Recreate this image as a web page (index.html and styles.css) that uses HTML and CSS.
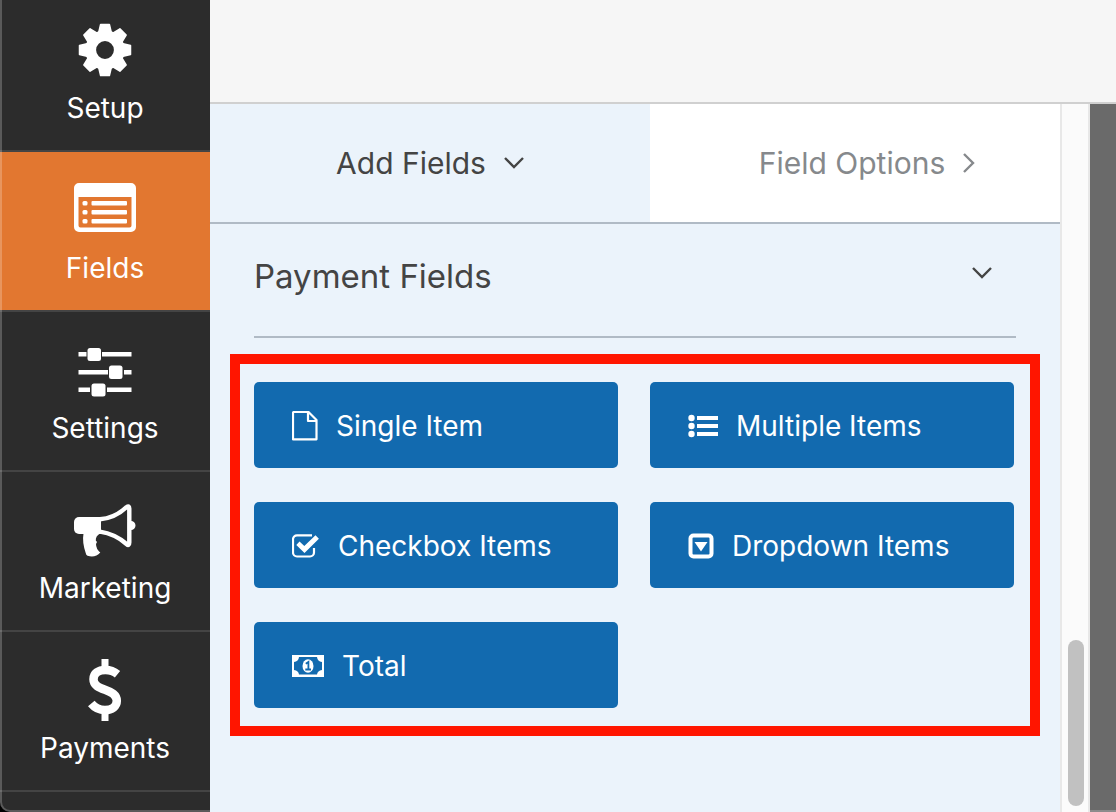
FILE: index.html
```html
<!DOCTYPE html>
<html lang="en">
<head>
<meta charset="utf-8">
<title>Form Builder</title>
<link rel="stylesheet" href="styles.css">
</head>
<body>
<div class="app">
  <nav class="sidebar" aria-label="Builder sections">
    <button class="nav-item" type="button">
      <svg class="nav-icon" viewBox="0 0 64 64" aria-hidden="true">
        <defs><path id="tooth" d="M27.600 6.500h8.800l2 8.500v3H25.600v-3z" stroke="#fff" stroke-width="1.500" stroke-linejoin="round"/></defs>
        <circle cx="32" cy="32" r="14.300" fill="none" stroke="#fff" stroke-width="10.800"/>
        <use href="#tooth"/>
        <use href="#tooth" transform="rotate(45 32 32)"/>
        <use href="#tooth" transform="rotate(90 32 32)"/>
        <use href="#tooth" transform="rotate(135 32 32)"/>
        <use href="#tooth" transform="rotate(180 32 32)"/>
        <use href="#tooth" transform="rotate(225 32 32)"/>
        <use href="#tooth" transform="rotate(270 32 32)"/>
        <use href="#tooth" transform="rotate(315 32 32)"/>
      </svg>
      <span>Setup</span>
    </button>
    <button class="nav-item active" type="button">
      <svg class="nav-icon" viewBox="0 0 64 64" aria-hidden="true">
        <path fill-rule="evenodd" d="M6 5h52a5 5 0 0 1 5 5v39a5 5 0 0 1-5 5H6a5 5 0 0 1-5-5V10a5 5 0 0 1 5-5zM5.500 19v28.500a2 2 0 0 0 2 2h49a2 2 0 0 0 2-2V19z"/>
        <rect x="9.500" y="23" width="5" height="4.500" rx="1.500"/><rect x="18.500" y="23" width="35.500" height="4.500" rx="1"/>
        <rect x="9.500" y="32" width="5" height="4.500" rx="1.500"/><rect x="18.500" y="32" width="35.500" height="4.500" rx="1"/>
        <rect x="9.500" y="41" width="5" height="4.500" rx="1.500"/><rect x="18.500" y="41" width="35.500" height="4.500" rx="1"/>
      </svg>
      <span>Fields</span>
    </button>
    <button class="nav-item" type="button">
      <svg class="nav-icon" viewBox="0 0 64 64" aria-hidden="true">
        <path d="M5.500 14h8v4.500h-8zM29 14h29.500v4.500H29zM5.500 32h29.500v4.500H5.500zM51 32h7.500v4.500H51zM5.500 49.500h11.500V54H5.500zM34 49.500h24.500V54H34z"/>
        <rect x="14.500" y="10" width="13.500" height="13" rx="2.500"/>
        <rect x="36" y="27.500" width="13.500" height="13.500" rx="2.500"/>
        <rect x="18.500" y="45.500" width="14" height="13" rx="2.500"/>
      </svg>
      <span>Settings</span>
    </button>
    <button class="nav-item" type="button">
      <svg class="nav-icon" viewBox="0 0 64 64" aria-hidden="true">
        <path d="M6 19h22v17H6a5 5 0 0 1-5-5v-7a5 5 0 0 1 5-5z"/>
        <path d="M27 21.300Q42 20 53.500 9.200Q56.300 7 56.300 10.500V44.500Q56.300 48.500 53.500 46Q42 36 27 33.700" fill="none" stroke="#fff" stroke-width="4.400"/>
        <path d="M58 23a4.500 4.500 0 0 1 0 9zM10.500 35.500H27Q22.500 38 22.800 42.500L24 44L23 46Q23 51 27.300 54.500Q22.500 60 14.500 57.800Q13 57 12.700 55Q9 44 10.500 35.500z"/>
      </svg>
      <span>Marketing</span>
    </button>
    <button class="nav-item" type="button">
      <svg class="nav-icon" viewBox="0 0 64 64" aria-hidden="true">
        <path d="M28.500 1h7v11h-7zM28.500 52h7v11h-7z"/>
        <path d="M44.500 16.200C40.500 13 36.500 12 32.500 12C25 12 20.500 15.500 20.500 21.200C20.500 27.500 26 29.500 32 31.700C38.500 34 43.800 36.500 43.800 42.800C43.800 48.500 39 52 32 52C26.500 52 22 50 18.300 45.500" fill="none" stroke="#fff" stroke-width="8.500"/>
      </svg>
      <span>Payments</span>
    </button>
    <div class="sidebar-frame"></div>
  </nav>

  <div class="workspace">
    <header class="topbar"></header>
    <div class="content">
      <main class="panel">
        <div class="tabs">
          <button class="tab selected" type="button">Add Fields
            <svg class="chevron" viewBox="0 0 20 20" aria-hidden="true"><path d="M1 5l9 9 9-9"/></svg>
          </button>
          <button class="tab" type="button">Field Options
            <svg class="chevron" viewBox="0 0 20 20" aria-hidden="true"><path d="M5 1l9 9-9 9"/></svg>
          </button>
        </div>
        <div class="group-head">
          <h1>Payment Fields</h1>
          <button class="collapse" type="button" aria-label="Collapse Payment Fields">
            <svg class="chevron" viewBox="0 0 20 20" aria-hidden="true"><path d="M1 6l9 9 9-9"/></svg>
          </button>
        </div>
        <section class="fields">
          <button class="field" type="button">
            <svg width="26" height="30" viewBox="0 0 26 30" aria-hidden="true"><path d="M2 1h14.500l8 8v19.300H1V2a1 1 0 0 1 1-1zM16 1v9h8.500" fill="none" stroke="#fff" stroke-width="2.200" stroke-linejoin="round"/></svg>
            Single Item
          </button>
          <button class="field" type="button">
            <svg width="30" height="24" viewBox="0 0 30 24" aria-hidden="true"><circle cx="3.500" cy="4" r="3.200"/><circle cx="3.500" cy="12" r="3.200"/><circle cx="3.500" cy="20" r="3.200"/><path d="M9 2h21v4H9zM9 10h21v4H9zM9 18h21v4H9z"/></svg>
            Multiple Items
          </button>
          <button class="field" type="button">
            <svg width="28" height="24" viewBox="0 0 28 24" aria-hidden="true"><path d="M20 1.300H5A4 4 0 0 0 1 5.300V18.500a4 4 0 0 0 4 4H18a4 4 0 0 0 4-4V14" fill="none" stroke="#fff" stroke-width="2.200"/><path d="M4.300 11l3.200-3.400 4.800 4.500L23.500 1.200l3.400 3.500L12.500 19z"/></svg>
            Checkbox Items
          </button>
          <button class="field" type="button">
            <svg width="26" height="26" viewBox="0 0 26 26" aria-hidden="true"><rect x="2.500" y="2.500" width="21" height="21" rx="3" fill="none" stroke="#fff" stroke-width="4"/><path d="M6.500 9h13L13 18.500z"/></svg>
            Dropdown Items
          </button>
          <button class="field" type="button">
            <svg width="32" height="22" viewBox="0 0 32 22" aria-hidden="true"><path fill-rule="evenodd" d="M0 0h32v22H0zM7 2Q6.500 6.500 2 7v8q4.500.5 5 4.500h18q.5-4 5-4.500V7q-4.500-.5-5-5z"/><ellipse cx="16" cy="11" rx="5.500" ry="6.800"/><path d="M13.800 8.800l2.600-1.800v7M13.300 14.500h5.700" fill="none" stroke="#126aaf" stroke-width="1.800"/></svg>
            Total
          </button>
        </section>
      </main>
      <div class="scroll-track"><div class="scroll-thumb"></div></div>
      <div class="preview-edge"></div>
    </div>
  </div>
</div>
</body>
</html>
```
FILE: styles.css
```css
* {
  box-sizing: border-box;
}

body {
  margin: 0;
  font-family: Inter, "Liberation Sans", sans-serif;
  font-size: 28px;
  line-height: 32px;
}

button {
  margin: 0;
  border: 0;
  padding: 0;
  background: none;
  color: inherit;
  font: inherit;
  cursor: pointer;
}

svg {
  flex: none;
  fill: #fff;
}

.app {
  display: flex;
  min-height: 100vh;
}

/* Sidebar */
.sidebar {
  position: relative;
  display: flex;
  flex: none;
  flex-direction: column;
  width: 210px;
  overflow: hidden;
  background: #2c2c2c;
  color: #fff;
}

.nav-item {
  display: flex;
  flex-direction: column;
  align-items: center;
  gap: 10px;
  padding: 26px 0;
  border-bottom: 2px solid #444;
}

.nav-item:first-child {
  padding-top: 18px;
}

.nav-item.active {
  background: #e27730;
}

.nav-icon {
  width: 64px;
  height: 64px;
}

.sidebar-frame {
  position: absolute;
  inset: 0;
  border-bottom: 2px solid rgba(255, 255, 255, 0.22);
  border-left: 2px solid rgba(255, 255, 255, 0.22);
  border-bottom-left-radius: 10px;
  box-shadow: 0 0 0 10px #000;
  pointer-events: none;
}

/* Workspace */
.workspace {
  display: flex;
  flex: 1;
  flex-direction: column;
  min-width: 0;
}

.topbar {
  height: 104px;
  border-bottom: 2px solid #d0d0d0;
  background: #f6f6f6;
}

.content {
  display: flex;
  flex: 1;
}

.panel {
  flex: 1;
  min-width: 0;
  background: #ebf3fb;
  color: #444;
}

.tabs {
  display: grid;
  grid-template-columns: 44fr 41fr;
  border-bottom: 2px solid #b0bac5;
  background: #fff;
  font-size: 30px;
}

.tab {
  display: flex;
  align-items: center;
  justify-content: center;
  gap: 14px;
  padding: 43px 0 43px 28px;
  color: #86898c;
}

.tab.selected {
  gap: 18px;
  padding-left: 0;
  background: #ebf3fb;
  color: #444;
}

.chevron {
  width: 20px;
  height: 20px;
  fill: none;
  stroke: currentColor;
  stroke-width: 2.4;
}

.group-head {
  display: flex;
  align-items: center;
  justify-content: space-between;
  margin: 0 44px 16px;
  padding: 32px 24px 40px 0;
  border-bottom: 2px solid #b0bac5;
}

.group-head h1 {
  margin: 0;
  font-size: 33px;
  font-weight: 400;
  line-height: 40px;
}

.collapse {
  display: flex;
  padding-bottom: 8px;
}

.fields {
  display: grid;
  grid-template-columns: 1fr 1fr;
  gap: 34px 32px;
  margin: 0 20px;
  padding: 18px 16px 18px 14px;
  border: 10px solid #ff1500;
}

.field {
  display: flex;
  align-items: center;
  gap: 18px;
  padding: 28px 38px 26px;
  border-radius: 5px;
  background: #126aaf;
  color: #fff;
}

/* Scrollbar and page edge */
.scroll-track {
  display: flex;
  flex: none;
  flex-direction: column;
  justify-content: flex-end;
  width: 30px;
  padding: 6px 4px 6px 6px;
  border-right: 2px solid #e8e8e8;
  border-left: 2px solid #e8e8e8;
  background: #fbfbfb;
}

.scroll-thumb {
  height: 166px;
  border-radius: 8px;
  background: #c1c1c1;
}

.preview-edge {
  flex: none;
  width: 26px;
  border-bottom: 2px solid #8c8c8c;
  background: #6a6a6a;
}
```
